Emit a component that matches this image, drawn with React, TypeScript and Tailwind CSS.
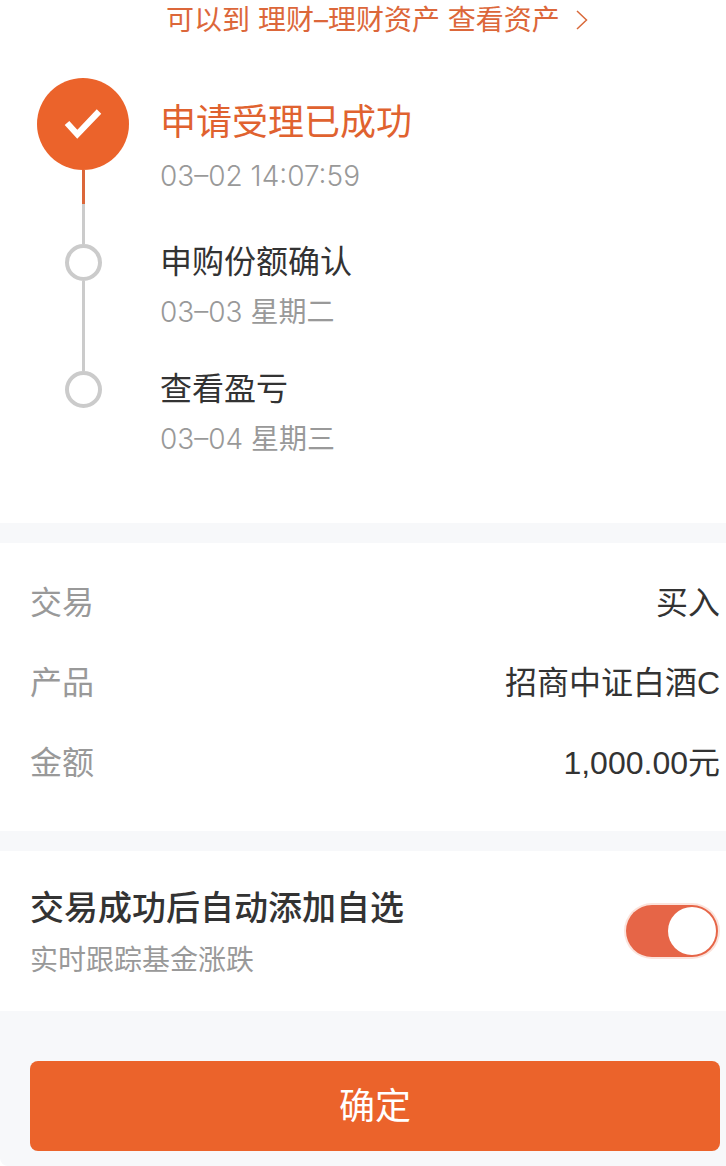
import { useState } from "react";

const steps = [
  { title: "申请受理已成功", date: "03–02 14:07:59", weekday: "", done: true },
  { title: "申购份额确认", date: "03–03", weekday: "星期二", done: false },
  { title: "查看盈亏", date: "03–04", weekday: "星期三", done: false },
];

const details = [
  { label: "交易", value: "买入" },
  { label: "产品", value: "招商中证白酒C" },
  { label: "金额", value: "1,000.00元" },
];

const CheckIcon = () => (
  <svg viewBox="0 0 92 92" className="size-full" fill="none" aria-hidden="true">
    <path d="M30 45 L40.3 56.3 L62 33.5" stroke="#fff" strokeWidth="6.2" />
  </svg>
);

const ChevronIcon = () => (
  <svg viewBox="0 0 12 20" className="w-3 h-5" fill="none" aria-hidden="true">
    <path d="M1 1 L10.5 10 L1 19" stroke="#d9693a" strokeWidth="1.5" />
  </svg>
);

const Step = ({ step, last }: { step: (typeof steps)[number]; last: boolean }) => (
  <li className="flex gap-[31px]">
    {/* Rail */}
    <div className="w-[92px] shrink-0 flex flex-col items-center">
      {step.done ? (
        <>
          <div className="size-[92px] rounded-full bg-[#eb632b]">
            <CheckIcon />
          </div>
          <div className="w-[3px] h-[34px] bg-[#dc673a]" />
        </>
      ) : (
        <div className="size-[37px] shrink-0 rounded-full border-4 border-[#cbcbcb]" />
      )}
      {!last && <div className="w-[3px] flex-1 bg-[#cbcbcb]" />}
    </div>

    {step.done ? (
      <div className="pt-[18px] pb-12">
        <h2 className="text-[36px] leading-[52px] text-[#e0622f]">{step.title}</h2>
        <p className="mt-2 text-[28px] leading-[40px] font-light text-[#999]">{step.date}</p>
      </div>
    ) : (
      <div className="pb-[39px]">
        <h2 className="text-[32px] leading-[36px] text-[#333]">{step.title}</h2>
        <p className="mt-3 text-[28px] leading-[40px] text-[#999]">
          <span className="font-light">{step.date}</span> {step.weekday}
        </p>
      </div>
    )}
  </li>
);

const App = () => {
  const [autoAdd, setAutoAdd] = useState(true);

  return (
    <div className="bg-white">
      <main className="min-h-screen rounded-bl-lg bg-[#f7f8fa] font-['Inter','Noto_Sans_CJK_SC',sans-serif]">
        {/* Progress */}
        <section className="bg-white pb-[25px]">
          <div className="flex justify-center pl-7">
            <a href="#assets" className="flex items-center gap-4 text-[28px] leading-[40px] text-[#dc673a]">
              可以到 理财–理财资产 查看资产
              <ChevronIcon />
            </a>
          </div>
          <ol className="mt-[38px] pl-[37px]">
            {steps.map((step, index) => (
              <Step key={step.title} step={step} last={index === steps.length - 1} />
            ))}
          </ol>
        </section>

        {/* Order details */}
        <section className="mt-5 bg-white pt-5 pb-7 pl-[30px] pr-[6px]">
          <dl>
            {details.map((item) => (
              <div key={item.label} className="flex items-center justify-between text-[32px] leading-[80px]">
                <dt className="text-[#999]">{item.label}</dt>
                <dd className="font-['Liberation_Sans','Noto_Sans_CJK_SC',sans-serif] text-[#333]">{item.value}</dd>
              </div>
            ))}
          </dl>
        </section>

        {/* Auto add switch */}
        <section className="mt-5 bg-white flex items-center justify-between py-[31px] pl-[30px] pr-2">
          <label htmlFor="auto-add">
            <span className="block text-[34px] leading-[52px] font-medium text-[#333]">交易成功后自动添加自选</span>
            <span className="block mt-[6px] text-[28px] leading-[40px] text-[#999]">实时跟踪基金涨跌</span>
          </label>
          <input
            id="auto-add"
            type="checkbox"
            role="switch"
            checked={autoAdd}
            onChange={(e) => setAutoAdd(e.target.checked)}
            className="appearance-none shrink-0 flex items-center w-[92px] h-[52px] px-[2px] rounded-full bg-gray-300 ring-2 ring-[#fbe3dc] checked:bg-[#e66547] checked:justify-end before:block before:size-12 before:rounded-full before:bg-white before:content-['']"
          />
        </section>

        <div className="pt-[50px] pb-[15px] pl-[30px] pr-[6px]">
          <button type="button" className="w-full h-[90px] rounded-lg bg-[#eb632b] text-[36px] text-white">
            确定
          </button>
        </div>
      </main>
    </div>
  );
};

export default App;
